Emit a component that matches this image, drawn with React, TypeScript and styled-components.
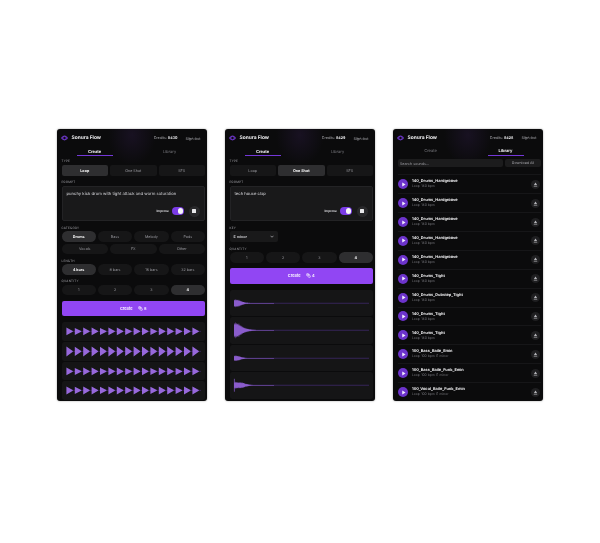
import styled, { createGlobalStyle } from "styled-components";
import { Coins } from "lucide-react";

const GlobalStyle = createGlobalStyle`
  html, body {
    margin: 0;
    background: #fff;
  }
  * {
    box-sizing: border-box;
  }
`;

const Page = styled.div`
  width: 600px;
  height: 543px;
  padding-top: 129px;
  display: flex;
  justify-content: center;
  align-items: flex-start;
  gap: 18px;
  font-family: Inter, "Liberation Sans", sans-serif;
  text-rendering: geometricPrecision;
  color: #fff;
  overflow: hidden;
`;

const Panel = styled.section`
  width: 150px;
  height: 272px;
  border-radius: 3px;
  background:
    radial-gradient(ellipse 24px 30px at 50% 6px, rgba(70, 40, 110, 0.22), transparent),
    #0b0b0c;
  box-shadow: 0 0 2px rgba(0, 0, 0, 0.4);
  overflow: hidden;
  display: flex;
  flex-direction: column;
  filter: blur(0.22px);
`;

const Header = styled.header`
  height: 18px;
  padding: 0 6.5px 0 4px;
  display: flex;
  align-items: center;
`;

const Brand = styled.div`
  display: flex;
  align-items: center;
  gap: 3.5px;
  font-size: 4.9px;
  font-weight: 700;
  color: #eeeef0;
`;

const Credits = styled.div`
  margin-left: auto;
  font-size: 3.6px;
  color: #a9a9ae;
  b {
    color: #f2f2f4;
    font-weight: 700;
  }
`;

const SignOut = styled.div`
  margin-left: 8px;
  font-size: 3.9px;
  color: #a9a9ae;
`;

const Tabs = styled.nav`
  height: 9px;
  display: grid;
  grid-template-columns: 1fr 1fr;
`;

const Tab = styled.div<{ $active?: boolean }>`
  position: relative;
  display: flex;
  justify-content: center;
  padding-top: 1.5px;
  font-size: 4px;
  line-height: 5px;
  font-weight: ${(p) => (p.$active ? 700 : 400)};
  color: ${(p) => (p.$active ? "#f4f4f6" : "#77777d")};
  &::after {
    content: "";
    display: ${(p) => (p.$active ? "block" : "none")};
    position: absolute;
    bottom: 0;
    left: 19.5px;
    right: 19.5px;
    height: 1px;
    background: #7437d8;
  }
`;

const Body = styled.div`
  padding: 3px 2px 0 4.5px;
  display: flex;
  flex-direction: column;
`;

const Section = styled.div`
  margin-bottom: 4.5px;
`;

const Label = styled.div`
  height: 4px;
  line-height: 4px;
  margin-bottom: 1.5px;
  font-size: 3px;
  letter-spacing: 0.2px;
  text-transform: uppercase;
  color: #a0a0a6;
`;

const Row = styled.div<{ $cols: number }>`
  display: grid;
  grid-template-columns: repeat(${(p) => p.$cols}, 1fr);
  gap: 2px;
  & + & {
    margin-top: 2px;
  }
`;

const Segment = styled.div<{ $active?: boolean }>`
  height: 11px;
  border-radius: 2px;
  display: flex;
  align-items: center;
  justify-content: center;
  font-size: 3.7px;
  font-weight: ${(p) => (p.$active ? 700 : 400)};
  color: ${(p) => (p.$active ? "#fafafa" : "#9a9aa0")};
  background: ${(p) => (p.$active ? "#2e2e30" : "#161617")};
`;

const Pill = styled(Segment)`
  height: 10.5px;
  border-radius: 6px;
`;

const PromptBox = styled.div`
  position: relative;
  height: 35.5px;
  padding: 5px 4px;
  border-radius: 2px;
  background: #19191a;
  border: 0.5px solid #232325;
  font-size: 4.2px;
  line-height: 5px;
  color: #dcdce0;
`;

const PromptTools = styled.div`
  position: absolute;
  right: 4.5px;
  bottom: 3.5px;
  display: flex;
  align-items: center;
  gap: 2.5px;
`;

const ImproveText = styled.span`
  font-size: 3.2px;
  font-weight: 600;
  color: #e0e0e4;
`;

const Toggle = styled.div`
  width: 12.5px;
  height: 7.5px;
  padding: 1px;
  border-radius: 4px;
  background: #7a3be6;
  display: flex;
  justify-content: flex-end;
  &::after {
    content: "";
    width: 5.5px;
    height: 5.5px;
    border-radius: 50%;
    background: #f5f5f7;
  }
`;

const StopButton = styled.div`
  margin-left: 2px;
  width: 11px;
  height: 11px;
  border-radius: 50%;
  background: #29292b;
  display: flex;
  align-items: center;
  justify-content: center;
  &::after {
    content: "";
    width: 3.6px;
    height: 3.6px;
    border-radius: 0.6px;
    background: #e8e8ea;
  }
`;

const KeySelect = styled.div`
  width: 48px;
  height: 11px;
  padding: 0 4px;
  border-radius: 2px;
  background: #19191a;
  display: flex;
  align-items: center;
  justify-content: space-between;
  font-size: 3.7px;
  font-weight: 600;
  color: #d8d8dc;
`;

const CreateButton = styled.button`
  width: 143.5px;
  height: 15.5px;
  padding: 0;
  margin-top: 1px;
  margin-bottom: 6px;
  border: none;
  border-radius: 2px;
  background: #9146f3;
  color: #f6f0ff;
  font-family: inherit;
  font-size: 3.9px;
  font-weight: 700;
  display: flex;
  align-items: center;
  justify-content: center;
  gap: 5px;
`;

const CreateCount = styled.span`
  display: flex;
  align-items: center;
  gap: 1.5px;
`;

const Waves = styled.div`
  display: flex;
  flex-direction: column;
  gap: 1px;
`;

const WaveCard = styled.div<{ $height: number }>`
  height: ${(p) => p.$height}px;
  border-radius: 2.5px;
  background: #151516;
  svg {
    display: block;
  }
`;

const SearchRow = styled.div`
  display: flex;
  gap: 2.5px;
  margin-bottom: 7px;
`;

const SearchBox = styled.div`
  width: 105px;
  height: 8.5px;
  padding-left: 2.5px;
  border-radius: 2px;
  background: #1c1c1d;
  display: flex;
  align-items: center;
  font-size: 3.7px;
  color: #9c9ca2;
`;

const DownloadAll = styled.div`
  width: 36px;
  height: 8.5px;
  border-radius: 2px;
  background: #1c1c1d;
  display: flex;
  align-items: center;
  justify-content: center;
  font-size: 3.6px;
  color: #a8a8ae;
`;

const SoundList = styled.div`
  display: flex;
  flex-direction: column;
`;

const SoundRow = styled.div`
  height: 18.9px;
  padding-left: 0.5px;
  padding-right: 1.5px;
  border-top: 0.5px solid #161618;
  display: flex;
  align-items: center;
  gap: 4px;
`;

const PlayButton = styled.div`
  width: 10px;
  height: 10px;
  flex: none;
  border-radius: 50%;
  background: #6c33cb;
  display: flex;
  align-items: center;
  justify-content: center;
`;

const SoundInfo = styled.div`
  flex: 1;
  display: flex;
  flex-direction: column;
  gap: 1.6px;
`;

const SoundName = styled.div`
  font-size: 3.9px;
  line-height: 4.4px;
  font-weight: 700;
  color: #f2f2f4;
`;

const SoundMeta = styled.div`
  font-size: 3.3px;
  line-height: 3.6px;
  color: #77777d;
  word-spacing: 0.4px;
`;

const DownloadButton = styled.div`
  width: 9px;
  height: 9px;
  flex: none;
  border-radius: 50%;
  background: #1f1f21;
  display: flex;
  align-items: center;
  justify-content: center;
`;

function Logo() {
  return (
    <svg width="7" height="6" viewBox="0 0 14 12">
      <path d="M0 6 L3 2 L3 10 Z M14 6 L11 2 L11 10 Z" fill="#6a35c4" />
      <circle cx="7" cy="6" r="3.6" fill="none" stroke="#6a35c4" strokeWidth="2.4" />
    </svg>
  );
}

// each hit is a triangle: loud at the start, dying off to the right
function LoopWave({ height, amp }: { height: number; amp: number }) {
  const mid = height / 2;
  const shapes = Array.from({ length: 16 }, (_, i) => {
    const x = 4.4 + i * 8.4;
    const a = amp - (i % 3 === 1 ? 0.3 : 0);
    return `M${x} ${mid - a} L${x + 6.4} ${mid - 0.4} L${x + 6.4} ${mid + 0.4} L${x} ${mid + a} Z`;
  });
  return (
    <svg width="143" height={height}>
      <line x1="5" x2="139" y1={mid} y2={mid} stroke="#44296f" strokeWidth="0.7" />
      <path d={shapes.join(" ")} fill="#9768dc" />
    </svg>
  );
}

function ShotWave({ height, amp, body, decay, spike }: { height: number; amp: number; body: number; decay: number; spike?: boolean }) {
  const mid = height / 2;
  const upper: string[] = [];
  const lower: string[] = [];
  for (let x = 0; x <= 40; x += 0.5) {
    const jitter = 0.8 + 0.2 * Math.sin(x * 5.3);
    const attack = Math.min(1, 0.7 + x / 2);
    const fall = x < body ? 1 - (0.2 * x) / body : 0.8 * Math.exp(-(x - body) / decay);
    const a = Math.max(0.35, amp * attack * fall * jitter);
    upper.push(`${4 + x} ${mid - a}`);
    lower.unshift(`${4 + x} ${mid + a}`);
  }
  return (
    <svg width="143" height={height}>
      <line x1="4" x2="139" y1={mid} y2={mid} stroke="#3f2869" strokeWidth="0.8" />
      <path d={`M${upper.join(" L")} L${lower.join(" L")} Z`} fill="#8a5ccc" />
      {spike && <line x1="4.4" x2="4.4" y1={mid - amp * 1.7} y2={mid + amp * 1.7} stroke="#8a5ccc" strokeWidth="0.7" />}
    </svg>
  );
}

function PanelHeader({ credits }: { credits: number }) {
  return (
    <Header>
      <Brand>
        <Logo />
        Sonura Flow
      </Brand>
      <Credits>
        Credits: <b>{credits}</b>
      </Credits>
      <SignOut>Sign out</SignOut>
    </Header>
  );
}

function PanelTabs({ active }: { active: string }) {
  return (
    <Tabs>
      <Tab $active={active === "Create"}>Create</Tab>
      <Tab $active={active === "Library"}>Library</Tab>
    </Tabs>
  );
}

function TypeSection({ active }: { active: string }) {
  return (
    <Section>
      <Label>Type</Label>
      <Row $cols={3}>
        {["Loop", "One Shot", "SFX"].map((t) => (
          <Segment key={t} $active={t === active}>
            {t}
          </Segment>
        ))}
      </Row>
    </Section>
  );
}

function PromptSection({ text }: { text: string }) {
  return (
    <Section>
      <Label>Prompt</Label>
      <PromptBox>
        {text}
        <PromptTools>
          <ImproveText>Improve</ImproveText>
          <Toggle />
          <StopButton />
        </PromptTools>
      </PromptBox>
    </Section>
  );
}

function PillSection({ label, rows, active }: { label: string; rows: string[][]; active: string }) {
  return (
    <Section>
      <Label>{label}</Label>
      {rows.map((items) => (
        <Row $cols={items.length} key={items[0]}>
          {items.map((t) => (
            <Pill key={t} $active={t === active}>
              {t}
            </Pill>
          ))}
        </Row>
      ))}
    </Section>
  );
}

function Create({ count }: { count: number }) {
  return (
    <CreateButton>
      Create
      <CreateCount>
        <Coins size={5} strokeWidth={3} />
        {count}
      </CreateCount>
    </CreateButton>
  );
}

const sounds = [
  ["140_Drums_Hardgroove", "Loop 140 bpm"],
  ["140_Drums_Hardgroove", "Loop 140 bpm"],
  ["140_Drums_Hardgroove", "Loop 140 bpm"],
  ["140_Drums_Hardgroove", "Loop 140 bpm"],
  ["140_Drums_Hardgroove", "Loop 140 bpm"],
  ["140_Drums_Tight", "Loop 140 bpm"],
  ["140_Drums_Dubstep_Tight", "Loop 140 bpm"],
  ["140_Drums_Tight", "Loop 140 bpm"],
  ["140_Drums_Tight", "Loop 140 bpm"],
  ["100_Bass_Baile_Emin", "Loop 100 bpm E minor"],
  ["100_Bass_Baile_Funk_Emin", "Loop 100 bpm E minor"],
  ["100_Vocal_Baile_Funk_Emin", "Loop 100 bpm E minor"],
];

const quantity = [["1", "2", "3", "4"]];

export default function App() {
  return (
    <Page>
      <GlobalStyle />
      <Panel>
        <PanelHeader credits={8430} />
        <PanelTabs active="Create" />
        <Body>
          <TypeSection active="Loop" />
          <PromptSection text="punchy kick drum with tight attack and warm saturation" />
          <PillSection
            label="Category"
            active="Drums"
            rows={[
              ["Drums", "Bass", "Melody", "Pads"],
              ["Vocals", "FX", "Other"],
            ]}
          />
          <PillSection label="Length" active="4 bars" rows={[["4 bars", "8 bars", "16 bars", "32 bars"]]} />
          <PillSection label="Quantity" active="4" rows={quantity} />
          <Create count={8} />
          <Waves>
            {[3.8, 5, 3.8, 4].map((amp, i) => (
              <WaveCard $height={18.8} key={i}>
                <LoopWave height={18.8} amp={amp} />
              </WaveCard>
            ))}
          </Waves>
        </Body>
      </Panel>
      <Panel>
        <PanelHeader credits={8429} />
        <PanelTabs active="Create" />
        <Body>
          <TypeSection active="One Shot" />
          <PromptSection text="tech house clap" />
          <Section>
            <Label>Key</Label>
            <KeySelect>
              E minor
              <svg width="4" height="3" viewBox="0 0 8 6">
                <path d="M1 1.5 L4 4.5 L7 1.5" fill="none" stroke="#c8c8cc" strokeWidth="1.3" />
              </svg>
            </KeySelect>
          </Section>
          <PillSection label="Quantity" active="4" rows={quantity} />
          <Create count={4} />
          <Waves>
            <WaveCard $height={26.5}>
              <ShotWave height={26.5} amp={4.6} body={5} decay={5} />
            </WaveCard>
            <WaveCard $height={26.5}>
              <ShotWave height={26.5} amp={9} body={5} decay={6} />
            </WaveCard>
            <WaveCard $height={26.5}>
              <ShotWave height={26.5} amp={3.2} body={5} decay={4} />
            </WaveCard>
            <WaveCard $height={26.5}>
              <ShotWave height={26.5} amp={3.8} body={9} decay={5} spike />
            </WaveCard>
          </Waves>
        </Body>
      </Panel>
      <Panel>
        <PanelHeader credits={8428} />
        <PanelTabs active="Library" />
        <Body>
          <SearchRow>
            <SearchBox>Search sounds...</SearchBox>
            <DownloadAll>Download All</DownloadAll>
          </SearchRow>
          <SoundList>
            {sounds.map(([name, meta], i) => (
              <SoundRow key={i}>
                <PlayButton>
                  <svg width="5" height="5" viewBox="0 0 10 10">
                    <path d="M2.5 1 L9 5 L2.5 9 Z" fill="#f4f0ff" />
                  </svg>
                </PlayButton>
                <SoundInfo>
                  <SoundName>{name}</SoundName>
                  <SoundMeta>{meta}</SoundMeta>
                </SoundInfo>
                <DownloadButton>
                  <svg width="5" height="5" viewBox="0 0 10 10">
                    <path d="M5 1 L8.5 6.5 L1.5 6.5 Z M1.5 8 H8.5 V9.2 H1.5 Z" fill="#b4b4b8" />
                  </svg>
                </DownloadButton>
              </SoundRow>
            ))}
          </SoundList>
        </Body>
      </Panel>
    </Page>
  );
}
